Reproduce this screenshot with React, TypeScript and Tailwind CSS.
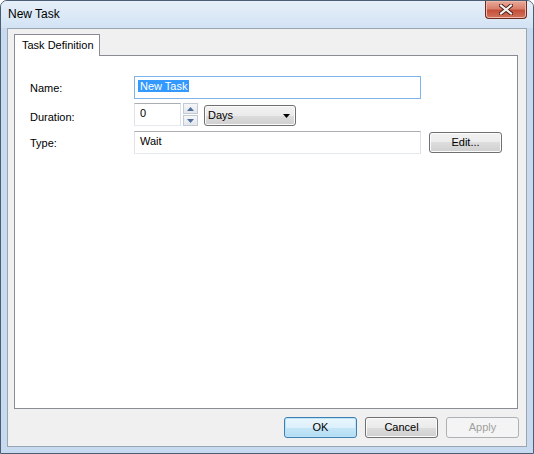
import { ReactNode } from "react";

function VistaButton({
  children,
  primary = false,
  disabled = false,
  className = "",
}: {
  children: ReactNode;
  primary?: boolean;
  disabled?: boolean;
  className?: string;
}) {
  let tone =
    "border-[#707070] bg-[linear-gradient(to_bottom,#f2f2f2_0%,#ebebeb_50%,#dddddd_50%,#cfcfcf_100%)] text-black shadow-[inset_0_0_0_1px_#fbfbfb]";
  if (primary)
    tone =
      "border-[#3c7fb1] bg-[linear-gradient(to_bottom,#eaf6fd_0%,#dcf0fb_50%,#c6e6f7_50%,#b3dcf2_100%)] text-black shadow-[inset_0_0_0_1px_#bde3f9]";
  if (disabled) tone = "border-[#adb2b5] bg-[#f4f4f4] text-[#a0a0a0]";
  return (
    <div
      className={`flex h-[21px] w-[73px] items-center justify-center rounded-[3px] border text-[11px] ${tone} ${className}`}
    >
      {children}
    </div>
  );
}

function TextBox({
  children,
  focused = false,
  className = "",
}: {
  children: ReactNode;
  focused?: boolean;
  className?: string;
}) {
  const border = focused
    ? "border-[#7eb4ea]"
    : "border-[#abadb3] border-l-[#e2e3ea] border-r-[#dbdfe6] border-b-[#e3e9ef]";
  return (
    <div
      className={`h-[23px] border bg-white pl-[3px] pt-[3px] text-[11px] leading-[13px] ${border} ${className}`}
    >
      {children}
    </div>
  );
}

function Spinner() {
  const half =
    "flex h-[11px] w-[15px] items-center justify-center border border-[#c3cad3] bg-[linear-gradient(to_bottom,#f6f7f9,#e3e7ec)]";
  return (
    <div className="ml-[2px] flex flex-col gap-px">
      <div className={half}>
        <svg width="7" height="4" viewBox="0 0 7 4">
          <path d="M0 4 L3.5 0 L7 4 Z" fill="#4d6f9a" />
        </svg>
      </div>
      <div className={half}>
        <svg width="7" height="4" viewBox="0 0 7 4">
          <path d="M0 0 L3.5 4 L7 0 Z" fill="#4d6f9a" />
        </svg>
      </div>
    </div>
  );
}

function Combo() {
  return (
    <div className="ml-[6px] mt-[2px] flex h-[21px] w-[92px] items-center justify-between rounded-[3px] border border-[#707070] bg-[linear-gradient(to_bottom,#f2f2f2_0%,#ebebeb_50%,#dddddd_50%,#cfcfcf_100%)] pl-[3px] pr-[5px] text-[11px] shadow-[inset_0_0_0_1px_#fbfbfb]">
      <span>Days</span>
      <svg width="7" height="4" viewBox="0 0 7 4">
        <path d="M0 0 L7 0 L3.5 4 Z" fill="#000" />
      </svg>
    </div>
  );
}

function CloseButton() {
  return (
    <div className="flex h-[18px] w-[42px] items-center justify-center rounded-b-[4px] border border-t-0 border-[#6b2a1f] bg-[linear-gradient(to_bottom,#e9a99a_0%,#d8806c_45%,#c5503a_55%,#d2735c_100%)] shadow-[inset_0_0_0_1px_#efb7a8]">
      <svg width="14" height="11" viewBox="0 0 14 11">
        <path d="M2 1.5 L12 9.5 M12 1.5 L2 9.5" stroke="#4a1a12" strokeWidth="4" strokeLinecap="square" />
        <path d="M2 1.5 L12 9.5 M12 1.5 L2 9.5" stroke="#f2f2f2" strokeWidth="2.2" strokeLinecap="square" />
      </svg>
    </div>
  );
}

export default function App() {
  return (
    <div className="h-[454px] w-[534px] bg-white font-['Liberation_Sans',Arial,sans-serif] text-black">
      <div className="flex h-full w-full flex-col rounded-t-[7px] border border-[#4a5d73] bg-[#c7daef]">
        {/* title bar */}
        <div className="flex h-[27px] shrink-0 items-start justify-between rounded-t-[6px] bg-[linear-gradient(to_bottom,#e6eff9,#d3e3f4)] pl-[7px] pr-[6px]">
          <span className="pt-[6px] text-[12px] leading-[14px]">New Task</span>
          <CloseButton />
        </div>

        {/* client area */}
        <div className="mx-[6px] flex h-[419px] w-[520px] shrink-0 flex-col border border-[#9aa5b2] bg-[#f0f0f0]">
          <div className="pl-[6px] pt-[5px]">
            <div className="relative z-10 -mb-px flex h-[22px] w-[86px] items-center border border-b-0 border-[#898c95] bg-white pl-[7px] text-[11px]">
              Task Definition
            </div>
            <div className="h-[354px] w-[504px] border border-[#898c95] bg-white pl-[15px] pt-[20px]">
              <div className="flex items-center">
                <span className="mt-[2px] w-[104px] text-[11px]">Name:</span>
                <TextBox focused className="w-[287px]">
                  <span className="bg-[#3399ff] px-[2px] text-white">New Task</span>
                </TextBox>
              </div>

              <div className="mt-[4px] flex items-start">
                <span className="mt-[6px] w-[104px] text-[11px]">Duration:</span>
                <TextBox className="w-[47px]">
                  <span className="pl-[2px]">0</span>
                </TextBox>
                <Spinner />
                <Combo />
              </div>

              <div className="mt-[5px] flex items-center">
                <span className="mt-[2px] w-[104px] text-[11px]">Type:</span>
                <TextBox className="w-[287px]">
                  <span className="pl-[2px]">Wait</span>
                </TextBox>
                <VistaButton className="ml-[8px]">Edit...</VistaButton>
              </div>
            </div>
          </div>

          <div className="mt-[8px] flex justify-end gap-[8px] pr-[7px]">
            <VistaButton primary>OK</VistaButton>
            <VistaButton>Cancel</VistaButton>
            <VistaButton disabled>Apply</VistaButton>
          </div>
        </div>
      </div>
    </div>
  );
}
